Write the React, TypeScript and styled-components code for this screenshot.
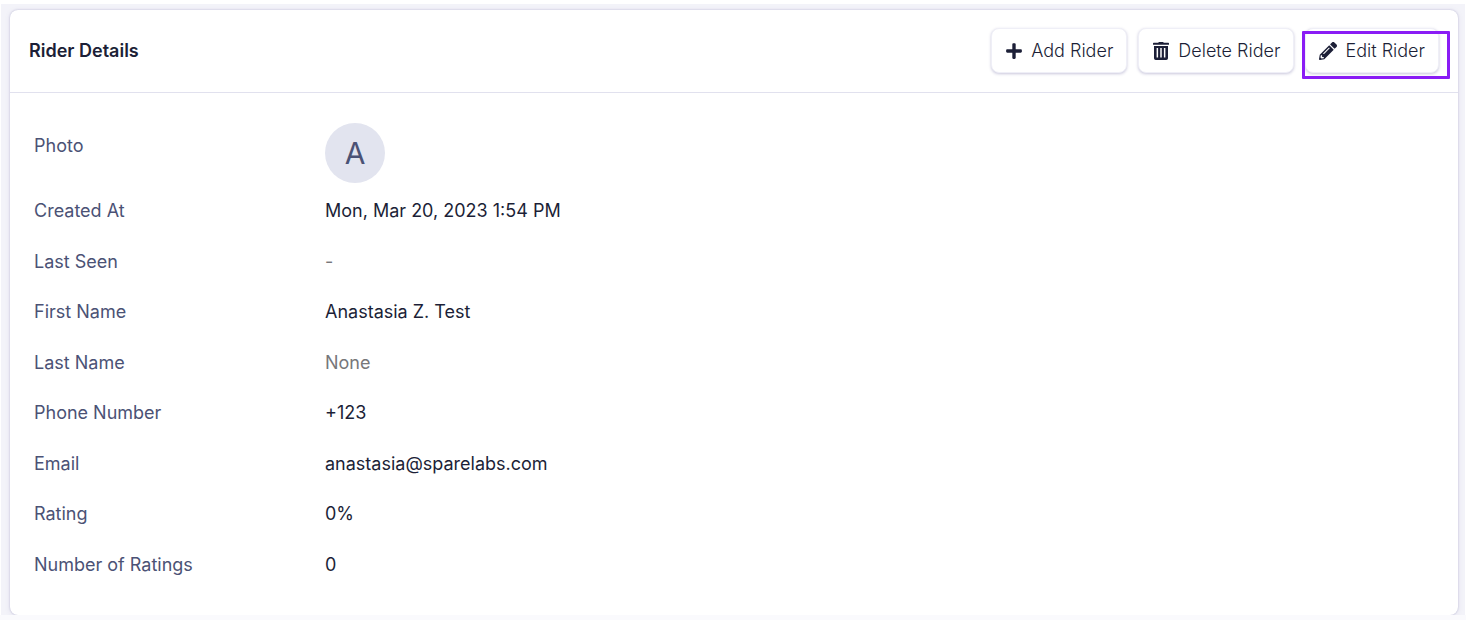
import React from "react";
import styled, { createGlobalStyle } from "styled-components";
import { FaPlus, FaPencilAlt } from "react-icons/fa";

const GlobalStyle = createGlobalStyle`
  *, *::before, *::after { box-sizing: border-box; }
  body {
    margin: 0;
    background: #ffffff;
    color: #1c1f37;
    font-family: Inter, "Liberation Sans", sans-serif;
    font-size: 18px;
    line-height: 24px;
  }
`;

const Page = styled.div`
  display: flex;
  flex-direction: column;
  min-height: 100vh;
  padding: 4px 1px 0;
`;

const Backdrop = styled.main`
  display: flex;
  flex: 1;
  padding: 6px 7px 0 9px;
  background: #f3f3f9;
  overflow: hidden;
`;

const BottomStrip = styled.footer`
  height: 5px;
  margin: 0 -1px;
  background: #fafafd;
`;

const Card = styled.section`
  display: flex;
  flex: 1;
  flex-direction: column;
  min-width: 0;
  border-radius: 8px;
  background: #ffffff;
  box-shadow: 0 0 2px rgba(60, 55, 130, 0.32), 0 1px 6px rgba(60, 55, 130, 0.08);
`;

const CardHeader = styled.header`
  display: flex;
  flex-wrap: wrap;
  align-items: center;
  justify-content: space-between;
  gap: 12px;
  padding: 18px 19px 19px;
  border-bottom: 1px solid #e1e1ee;
`;

const Title = styled.h1`
  margin: 0;
  font-size: 18px;
  font-weight: 600;
`;

const Actions = styled.div`
  display: flex;
  flex-wrap: wrap;
  align-items: center;
  gap: 11px;
`;

const ActionButton = styled.button`
  display: inline-flex;
  align-items: center;
  gap: 8px;
  height: 45px;
  padding: 0 13px;
  border: 1px solid #efeff7;
  border-radius: 8px;
  background: #ffffff;
  box-shadow: 0 1px 3px rgba(60, 55, 130, 0.28);
  color: #1c1f37;
  font: inherit;
  font-weight: 300;
  cursor: pointer;
`;

const Highlighted = styled.div`
  position: relative;
  display: flex;

  &::after {
    content: "";
    position: absolute;
    inset: 3px -11px -6px -3px;
    border: 3px solid #8a1cf5;
    border-radius: 1px;
    pointer-events: none;
  }
`;

const Details = styled.dl`
  display: grid;
  flex: 1;
  grid-template-columns: 291px 1fr;
  grid-template-rows: 67px;
  grid-auto-rows: minmax(36px, 1fr);
  margin: 0;
  padding: 26px 24px 25px;
  align-items: center;
`;

const Label = styled.dt<{ $top?: boolean }>`
  align-self: ${({ $top }) => ($top ? "start" : "center")};
  padding-top: ${({ $top }) => ($top ? "15px" : "0")};
  color: #4b5275;
`;

const Value = styled.dd<{ $muted?: boolean }>`
  margin: 0;
  color: ${({ $muted }) => ($muted ? "#77777a" : "#1c1f37")};
`;

const Avatar = styled.div`
  display: flex;
  align-items: center;
  justify-content: center;
  width: 60px;
  height: 60px;
  border-radius: 50%;
  background: #e2e4ef;
  color: #4b5275;
  font-size: 30px;
`;

function TrashIcon() {
  return (
    <svg width="18" height="18" viewBox="0 0 18 18" aria-hidden>
      <path
        fill="currentColor"
        fillRule="evenodd"
        d="M6.2 .8Q6.5 0 7.2 0h3.6q.7 0 1 .8h4.5q.7 0 .7.7v1.2H1V1.5q0-.7.7-.7zM2 4h14v12.2q0 1.8-1.8 1.8H3.800Q2 18 2 16.2zM4.6 6v9.6h1.5V6zM8.25 6v9.6h1.5V6zM11.9 6v9.6h1.5V6z"
      />
    </svg>
  );
}

const rows: { label: string; value: string; muted?: boolean }[] = [
  { label: "Created At", value: "Mon, Mar 20, 2023 1:54 PM" },
  { label: "Last Seen", value: "-", muted: true },
  { label: "First Name", value: "Anastasia Z. Test" },
  { label: "Last Name", value: "None", muted: true },
  { label: "Phone Number", value: "+123" },
  { label: "Email", value: "anastasia@sparelabs.com" },
  { label: "Rating", value: "0%" },
  { label: "Number of Ratings", value: "0" },
];

export default function App() {
  return (
    <>
      <GlobalStyle />
      <Page>
        <Backdrop>
          <Card>
            <CardHeader>
              <Title>Rider Details</Title>
              <Actions>
                <ActionButton type="button">
                  <FaPlus size={18} aria-hidden />
                  Add Rider
                </ActionButton>
                <ActionButton type="button">
                  <TrashIcon />
                  Delete Rider
                </ActionButton>
                <Highlighted>
                  <ActionButton type="button">
                    <FaPencilAlt size={18} aria-hidden />
                    Edit Rider
                  </ActionButton>
                </Highlighted>
              </Actions>
            </CardHeader>
            <Details>
              <Label $top>Photo</Label>
              <Value>
                <Avatar>A</Avatar>
              </Value>
              {rows.map((row) => (
                <React.Fragment key={row.label}>
                  <Label>{row.label}</Label>
                  <Value $muted={row.muted}>{row.value}</Value>
                </React.Fragment>
              ))}
            </Details>
          </Card>
        </Backdrop>
        <BottomStrip />
      </Page>
    </>
  );
}
